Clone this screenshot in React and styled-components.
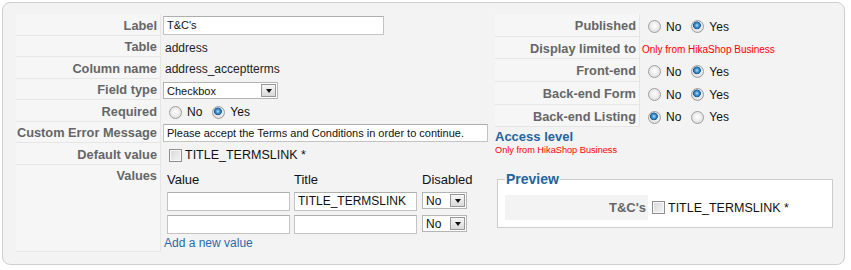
import React from 'react';
import styled, { createGlobalStyle, css } from 'styled-components';

const GlobalStyle = createGlobalStyle`
  body {
    margin: 0;
    background: #ffffff;
    font-family: 'Liberation Sans', Arial, sans-serif;
    color: #222;
  }
`;

const Panel = styled.div`
  margin: 2px;
  width: 843px;
  height: 263px;
  box-sizing: border-box;
  border: 1px solid #cfcfcf;
  border-radius: 8px;
  background: #f3f3f3;
  padding: 11px 12px 0 13px;
  display: flex;
  gap: 5px;
`;

const LeftCol = styled.div`
  width: 474px;
  display: flex;
  flex-direction: column;
`;

const RightCol = styled.div`
  width: 337px;
  display: flex;
  flex-direction: column;
`;

const Row = styled.div`
  display: grid;
  grid-template-columns: 145px 1fr;
  height: ${(p) => p.$h}px;
`;

const Key = styled.div`
  box-sizing: border-box;
  background: #f6f6f6;
  border-bottom: 1px solid #e6e6e6;
  border-right: 1px solid #e6e6e6;
  color: #666;
  font-weight: bold;
  font-size: 12.8px;
  line-height: 16px;
  padding-right: 3px;
  display: flex;
  justify-content: flex-end;
  align-items: ${(p) => (p.$top ? 'flex-start' : 'center')};
  padding-top: ${(p) => (p.$top ? '3px' : '2px')};
  white-space: nowrap;
`;

const Val = styled.div`
  display: flex;
  align-items: center;
  padding: ${(p) => (p.$flat ? 0 : 2)}px 0 0 2px;
  font-size: 12px;
  color: #222;
  white-space: nowrap;
`;

const Plain = styled.span`
  padding-left: 2px;
`;

const TextInput = styled.input`
  box-sizing: border-box;
  width: ${(p) => p.$w}px;
  height: ${(p) => p.$ht || 18}px;
  margin: 0;
  border: 1px solid #c3c3c3;
  border-top-color: #aeaeae;
  background: #fff;
  font-family: 'Liberation Sans', Arial, sans-serif;
  font-size: ${(p) => p.$fs || 11}px;
  color: #111;
  padding: 0 3px;
  outline: none;
`;

const SelectBox = styled.div`
  box-sizing: border-box;
  width: ${(p) => p.$w}px;
  height: 17px;
  border: 1px solid #b5b5b5;
  background: #fff;
  display: flex;
  align-items: center;
  font-size: ${(p) => p.$fs || 11}px;
  color: #111;
  padding-left: 3px;
`;

const SelectText = styled.span`
  flex: 1;
`;

const ArrowBtn = styled.span`
  box-sizing: border-box;
  width: 15px;
  height: 13px;
  margin-right: 1px;
  border: 1px solid #979797;
  background: linear-gradient(#f6f6f6, #dadada);
  display: flex;
  align-items: center;
  justify-content: center;
  &::after {
    content: '';
    border-left: 3.5px solid transparent;
    border-right: 3.5px solid transparent;
    border-top: 4px solid #111;
    margin-top: 1px;
  }
`;

const Radio = styled.input.attrs({ type: 'radio' })`
  appearance: none;
  box-sizing: border-box;
  width: 13px;
  height: 13px;
  margin: 0 5px 0 6px;
  border-radius: 50%;
  border: 1px solid #9d9d9d;
  background: radial-gradient(circle at 50% 45%, #ffffff 0, #f1f1f1 35%, #d6d6d6 100%);
  ${(p) =>
    p.checked &&
    css`
      background: radial-gradient(circle at 45% 40%, #a9e0fb 0, #3d94d3 2px, #1a5a90 3.6px, rgba(0, 0, 0, 0) 4.2px),
        radial-gradient(circle at 50% 45%, #ffffff 0, #eeeeee 45%, #cfcfcf 100%);
    `}
`;

const OptText = styled.span`
  font-size: 12px;
  color: #111;
  margin-right: 4px;
`;

const Check = styled.input.attrs({ type: 'checkbox' })`
  appearance: none;
  box-sizing: border-box;
  width: 13px;
  height: 13px;
  margin: 0 3px 0 ${(p) => p.$ml || 6}px;
  border: 1px solid #8f8f8f;
  background: linear-gradient(135deg, #d9d9d9, #f4f4f4);
  box-shadow: inset 0 0 0 1px #f7f7f7;
`;

const CheckText = styled.span`
  font-size: 12.5px;
  color: #111;
`;

const Note = styled.span`
  color: #ff0000;
  font-size: ${(p) => p.$fs || 10}px;
  line-height: 11px;
`;

const ValuesCell = styled.div`
  display: flex;
  flex-direction: column;
  padding-left: 3px;
`;

const ValuesGrid = styled.div`
  display: grid;
  grid-template-columns: 127px 128px 50px;
  grid-template-rows: 25px 23px 23px;
  margin-left: 1px;
`;

const ColHead = styled.div`
  padding: 0 0 2px 2px;
  display: flex;
  align-items: flex-end;
  font-size: 13px;
  line-height: 16px;
  color: #111;
`;

const GridCell = styled.div`
  padding: ${(p) => (p.$sel ? 2 : 1)}px 0 0 2px;
`;

const AddLink = styled.a`
  font-size: 12px;
  line-height: 15px;
  color: #2a6aa6;
  text-decoration: none;
`;

const AccessTitle = styled.div`
  margin-top: 2px;
  font-size: 13px;
  font-weight: bold;
  line-height: 16px;
  color: #23639f;
`;

const Fieldset = styled.fieldset`
  box-sizing: border-box;
  width: 336px;
  margin: 15px 0 0 2px;
  padding: 0 8px 7px 7px;
  border: 1px solid #cccccc;
  background: #fff;
`;

const Legend = styled.legend`
  padding: 0 1px;
  font-size: 14px;
  font-weight: bold;
  line-height: 17px;
  color: #23639f;
`;

const PreviewRow = styled.div`
  display: flex;
  align-items: center;
  margin-top: 7px;
`;

const PreviewKey = styled.div`
  width: 143px;
  height: 25px;
  box-sizing: border-box;
  background: #f3f3f3;
  color: #666;
  font-size: 13px;
  font-weight: bold;
  display: flex;
  align-items: center;
  justify-content: flex-end;
  padding-right: 2px;
`;

const Select = ({ w, fs, children }) => (
  <SelectBox $w={w} $fs={fs}>
    <SelectText>{children}</SelectText>
    <ArrowBtn />
  </SelectBox>
);

const YesNo = ({ yes }) => (
  <>
    <Radio checked={!yes} readOnly />
    <OptText>No</OptText>
    <Radio checked={yes} readOnly />
    <OptText>Yes</OptText>
  </>
);

export default function App() {
  return (
    <>
      <GlobalStyle />
      <Panel>
        <LeftCol>
          <Row $h={22}>
            <Key>Label</Key>
            <Val $flat>
              <TextInput $w={221} $ht={19} defaultValue="T&C's" />
            </Val>
          </Row>
          <Row $h={21}>
            <Key>Table</Key>
            <Val>
              <Plain>address</Plain>
            </Val>
          </Row>
          <Row $h={22}>
            <Key>Column name</Key>
            <Val>
              <Plain>address_acceptterms</Plain>
            </Val>
          </Row>
          <Row $h={21}>
            <Key>Field type</Key>
            <Val>
              <Select w={115}>Checkbox</Select>
            </Val>
          </Row>
          <Row $h={22}>
            <Key>Required</Key>
            <Val>
              <YesNo yes />
            </Val>
          </Row>
          <Row $h={21}>
            <Key>Custom Error Message</Key>
            <Val $flat>
              <TextInput
                $w={325}
                $ht={18}
                defaultValue="Please accept the Terms and Conditions in order to continue."
              />
            </Val>
          </Row>
          <Row $h={22}>
            <Key>Default value</Key>
            <Val>
              <Check />
              <CheckText>TITLE_TERMSLINK *</CheckText>
            </Val>
          </Row>
          <Row $h={87}>
            <Key $top>Values</Key>
            <ValuesCell>
              <ValuesGrid>
                <ColHead>Value</ColHead>
                <ColHead>Title</ColHead>
                <ColHead>Disabled</ColHead>
                <GridCell>
                  <TextInput $w={123} $ht={19} $fs={12} />
                </GridCell>
                <GridCell>
                  <TextInput $w={123} $ht={19} $fs={12} defaultValue="TITLE_TERMSLINK" />
                </GridCell>
                <GridCell $sel>
                  <Select w={45} fs={12}>No</Select>
                </GridCell>
                <GridCell>
                  <TextInput $w={123} $ht={19} $fs={12} />
                </GridCell>
                <GridCell>
                  <TextInput $w={123} $ht={19} $fs={12} />
                </GridCell>
                <GridCell $sel>
                  <Select w={45} fs={12}>No</Select>
                </GridCell>
              </ValuesGrid>
              <AddLink href="#">Add a new value</AddLink>
            </ValuesCell>
          </Row>
        </LeftCol>
        <RightCol>
          <Row $h={23}>
            <Key>Published</Key>
            <Val>
              <YesNo yes />
            </Val>
          </Row>
          <Row $h={22}>
            <Key>Display limited to</Key>
            <Val>
              <Note>Only from HikaShop Business</Note>
            </Val>
          </Row>
          <Row $h={23}>
            <Key>Front-end</Key>
            <Val>
              <YesNo yes />
            </Val>
          </Row>
          <Row $h={23}>
            <Key>Back-end Form</Key>
            <Val>
              <YesNo yes />
            </Val>
          </Row>
          <Row $h={22}>
            <Key>Back-end Listing</Key>
            <Val>
              <YesNo yes={false} />
            </Val>
          </Row>
          <AccessTitle>Access level</AccessTitle>
          <Note $fs={9.2}>Only from HikaShop Business</Note>
          <Fieldset>
            <Legend>Preview</Legend>
            <PreviewRow>
              <PreviewKey>T&amp;C's</PreviewKey>
              <Check $ml={4} />
              <CheckText>TITLE_TERMSLINK *</CheckText>
            </PreviewRow>
          </Fieldset>
        </RightCol>
      </Panel>
    </>
  );
}
